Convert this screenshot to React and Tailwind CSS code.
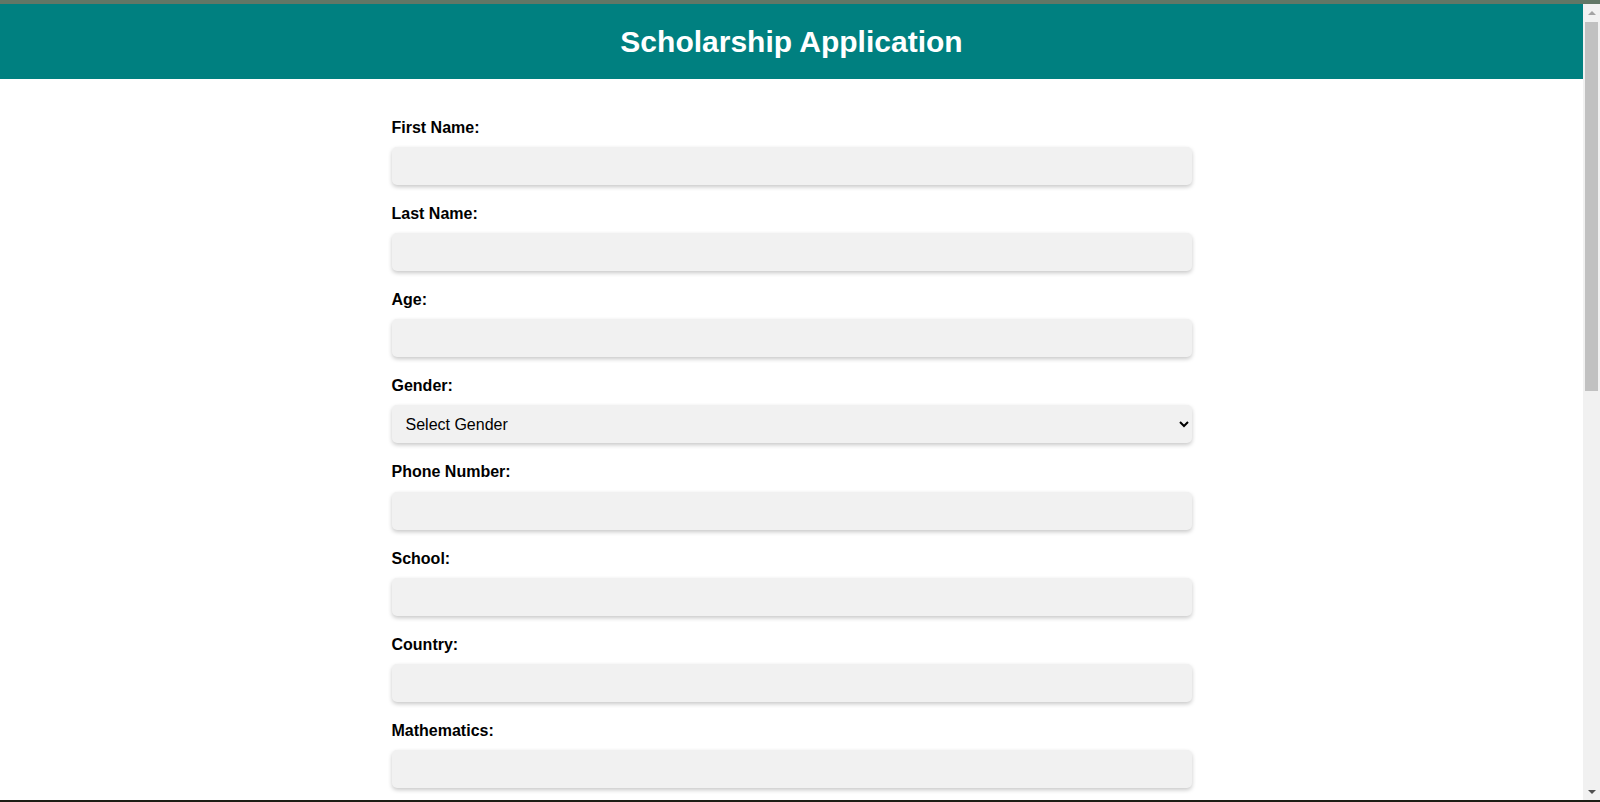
import React from 'react';

const fields = [
  { id: 'firstName', label: 'First Name:' },
  { id: 'lastName', label: 'Last Name:' },
  { id: 'age', label: 'Age:' },
  { id: 'gender', label: 'Gender:', select: true },
  { id: 'phone', label: 'Phone Number:' },
  { id: 'school', label: 'School:' },
  { id: 'country', label: 'Country:' },
  { id: 'math', label: 'Mathematics:' },
  { id: 'english', label: 'English:' },
  { id: 'science', label: 'Science:' },
];

function Field({ field }) {
  return (
    <div className="mb-5">
      <label htmlFor={field.id} className="block mb-2.5 text-base font-bold leading-[18.2px] text-black">
        {field.label}
      </label>
      {field.select ? (
        <select
          id={field.id}
          className="block w-full h-[38px] px-2.5 text-base leading-[1.15] text-black bg-[#f1f1f1] rounded-[5px] border-0 outline-none shadow-[0_2px_4px_rgba(0,0,0,0.22)]"
          defaultValue=""
        >
          <option value="">Select Gender</option>
          <option value="male">Male</option>
          <option value="female">Female</option>
        </select>
      ) : (
        <input
          id={field.id}
          type="text"
          className="block w-full h-[38px] px-2.5 text-base leading-[1.15] bg-[#f1f1f1] rounded-[5px] border-0 outline-none shadow-[0_2px_4px_rgba(0,0,0,0.22)]"
        />
      )}
    </div>
  );
}

function Scrollbar() {
  return (
    <div className="w-[17px] bg-[#f1f1f1] flex flex-col items-center">
      <div className="h-[18px] w-full flex items-center justify-center">
        <div className="w-0 h-0 border-x-[4px] border-x-transparent border-b-[4px] border-b-[#a3a3a3]" />
      </div>
      <div className="w-[13px] h-[369px] bg-[#c1c1c1]" />
      <div className="flex-1" />
      <div className="h-[17px] w-full flex items-center justify-center">
        <div className="w-0 h-0 border-x-[4px] border-x-transparent border-t-[4px] border-t-[#505050]" />
      </div>
    </div>
  );
}

export default function App() {
  return (
    <div className="h-[802px] flex flex-col overflow-hidden bg-white font-['Liberation_Sans',Arial,sans-serif]">
      <div className="h-1 bg-[#617766]" />
      <div className="flex flex-1 min-h-0">
        <main className="flex-1 overflow-hidden">
          <header className="bg-[#008080] pt-[21px] pb-[19px] text-center">
            <h1 className="text-[30px] font-bold leading-[34.5px] text-white">Scholarship Application</h1>
          </header>
          <form className="max-w-[800px] mx-auto pt-10" onSubmit={(e) => e.preventDefault()}>
            {fields.map((f) => (
              <Field key={f.id} field={f} />
            ))}
          </form>
        </main>
        <Scrollbar />
      </div>
      <div className="h-[2px] bg-[#1d1e16]" />
    </div>
  );
}
